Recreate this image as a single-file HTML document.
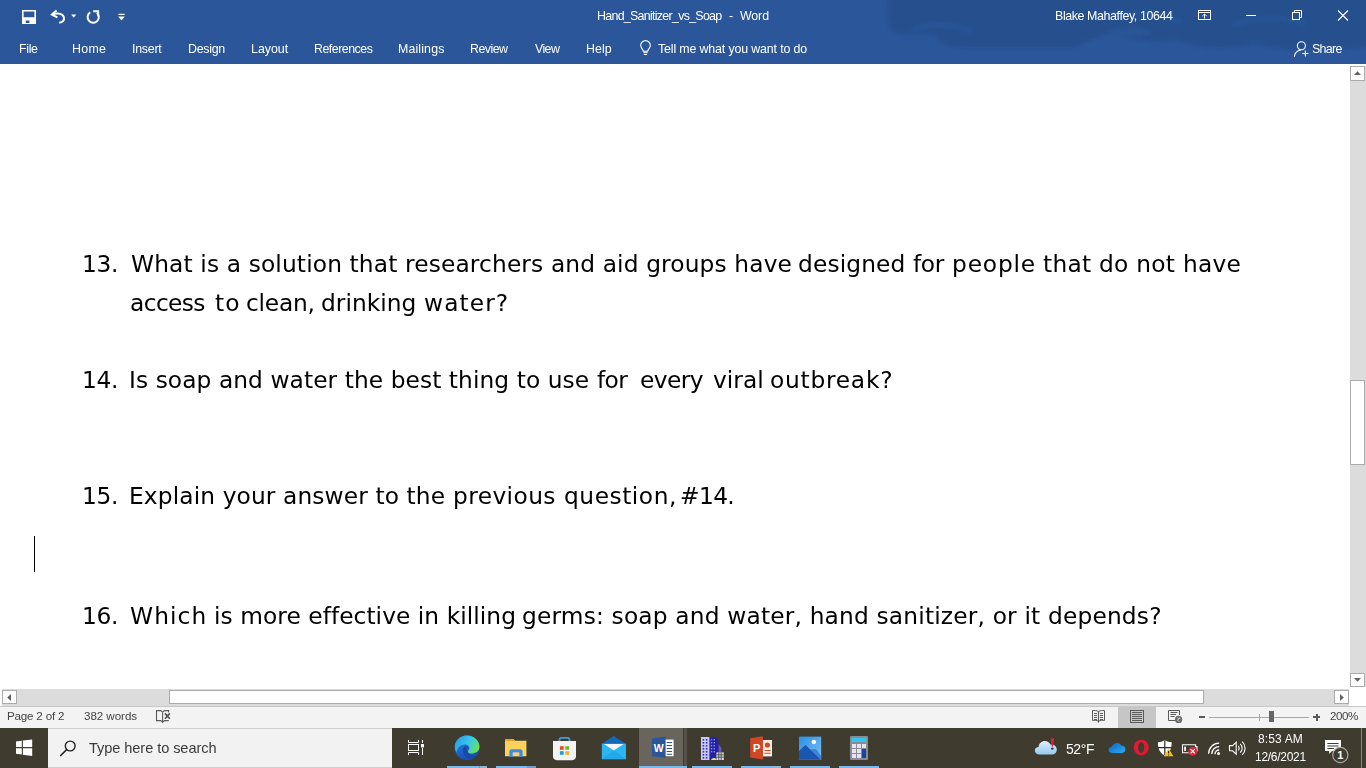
<!DOCTYPE html>
<html lang="en">
<head>
<meta charset="utf-8">
<title>Hand_Sanitizer_vs_Soap - Word</title>
<style>
*{box-sizing:border-box;margin:0;padding:0}
html,body{width:1366px;height:768px;overflow:hidden;background:#fff}
body{position:relative;font-family:"Liberation Sans",sans-serif;color:#000}
.abs{position:absolute}
.t{position:absolute;white-space:nowrap;line-height:1;will-change:transform}
#top{left:0;top:0;width:1366px;height:64px;background:#2b579a}
#top .t{color:#fff;font-size:12.4px}
#doc{left:0;top:64px;width:1349px;height:625px;background:#fff}
.q{position:absolute;white-space:nowrap;font-family:"DejaVu Sans","Liberation Sans",sans-serif;font-size:23.3px;line-height:1;color:#000;will-change:transform}
#vsb{left:1350px;top:66px;width:16px;height:621px;background:#dcdcdc}
#hsb{left:2px;top:689px;width:1347px;height:17px;background:#dcdcdc}
.sbtn{position:absolute;background:#fff;border:1px solid #ababab}
#status{left:0;top:706px;width:1366px;height:22px;background:#f3f3f3}
#status .t{color:#444;font-size:11.6px}
#task{left:0;top:728px;width:1366px;height:40px;background:#3f3b2f}
#task .t{color:#fff}
</style>
</head>
<body>
<!-- ===== Title bar + ribbon tabs ===== -->
<div id="top" class="abs">
  <!-- cloud pattern -->
  <svg class="abs" style="left:860px;top:0" width="506" height="64" viewBox="0 0 506 64">
    <defs><filter id="bl" x="-20%" y="-50%" width="140%" height="200%"><feGaussianBlur stdDeviation="2"/></filter></defs>
    <g filter="url(#bl)">
      <path d="M30 -6C24 8 26 26 34 34L74 35C78 44 90 49 110 48L212 48C226 44 236 36 250 34C270 40 296 44 316 40C340 50 372 50 396 44C420 52 470 52 520 46V-6Z" fill="#264f8e"/>
      <path d="M52 30C70 22 96 24 112 32M232 18C262 10 300 12 322 22M372 26C392 16 424 16 446 24" fill="none" stroke="#2b579a" stroke-width="4" opacity="0.8"/>
      <ellipse cx="270" cy="32" rx="22" ry="5" fill="#2b579a" opacity="0.7"/>
    </g>
  </svg>
  <span class="t" id="ttl" style="left:596.55px;top:10px;letter-spacing:-0.697px">Hand_Sanitizer_vs_Soap</span>
  <span class="t" id="ttlb" style="left:728.5px;top:10px">-</span>
  <span class="t" id="ttlc" style="left:739.64px;top:10px;letter-spacing:-0.12px">Word</span>
  <span class="t" id="usr" style="left:1054.91px;top:9.7px;letter-spacing:-0.387px">Blake Mahaffey, 10644</span>
  <span class="t" id="m1" style="left:19.36px;top:42.7px;letter-spacing:-0.33px">File</span>
  <span class="t" id="m2" style="left:72.4px;top:42.7px;letter-spacing:0.3px">Home</span>
  <span class="t" id="m3" style="left:132.46px;top:42.7px;letter-spacing:-0.252px">Insert</span>
  <span class="t" id="m4" style="left:188.09px;top:42.7px;letter-spacing:-0.27px">Design</span>
  <span class="t" id="m5" style="left:251.1px;top:42.7px;letter-spacing:0.0px">Layout</span>
  <span class="t" id="m6" style="left:314.1px;top:42.7px;letter-spacing:-0.5px">References</span>
  <span class="t" id="m7" style="left:398.1px;top:42.7px;letter-spacing:0.129px">Mailings</span>
  <span class="t" id="m8" style="left:470.1px;top:42.7px;letter-spacing:-0.54px">Review</span>
  <span class="t" id="m9" style="left:534.55px;top:42.7px;letter-spacing:-0.6px">View</span>
  <span class="t" id="m10" style="left:586.37px;top:42.7px;letter-spacing:0.06px">Help</span>
  <span class="t" id="m11" style="left:657.9px;top:42.7px;letter-spacing:-0.146px">Tell me what you want to do</span>
  <span class="t" id="m12" style="left:1312.19px;top:42.7px;letter-spacing:-0.675px">Share</span>

  <!-- quick access toolbar -->
  <svg class="abs" style="left:22px;top:10px" width="14" height="14" viewBox="0 0 14 14">
    <path d="M0 0H14V14H0ZM1.6 1.6V7.2H12.4V1.6ZM3.8 10.6V13H7.4V10.6Z" fill="#fff" fill-rule="evenodd"/>
  </svg>
  <svg class="abs" style="left:50px;top:9px" width="28" height="16" viewBox="0 0 28 16">
    <path d="M6.6 1.4L1.8 5.6L7.4 8.4" fill="none" stroke="#fff" stroke-width="2" stroke-linejoin="miter"/>
    <path d="M2.4 5.6C6.5 3.8 12.4 4 13.8 8C14.8 11.4 12.2 13.8 9.2 13.4" fill="none" stroke="#fff" stroke-width="2"/>
    <path d="M21.2 5.6H26.2L23.7 8.8Z" fill="#fff"/>
  </svg>
  <svg class="abs" style="left:85px;top:9px" width="16" height="16" viewBox="0 0 16 16">
    <path d="M5.2 3.4A5.6 5.6 0 1 0 11.8 3.8" fill="none" stroke="#fff" stroke-width="2"/>
    <path d="M8.2 2.2H13.2V7.2" fill="none" stroke="#fff" stroke-width="1.9"/>
  </svg>
  <svg class="abs" style="left:117px;top:13px" width="9" height="9" viewBox="0 0 9 9">
    <rect x="1.4" y="0.8" width="6.2" height="1.2" fill="#fff"/>
    <path d="M1.2 3.6H7.8L4.5 7.6Z" fill="#fff"/>
  </svg>
  <!-- lightbulb -->
  <svg class="abs" style="left:638px;top:40px" width="15" height="17" viewBox="0 0 15 17">
    <path d="M5.3 11.2C5.3 9.2 2.7 8.2 2.7 5.4A4.8 4.8 0 0 1 12.3 5.4C12.3 8.2 9.7 9.2 9.7 11.2Z" fill="none" stroke="#fff" stroke-width="1.1"/>
    <path d="M5.4 12.7H9.6M5.9 14.5H9.1" stroke="#fff" stroke-width="1"/>
  </svg>
  <!-- window controls -->
  <svg class="abs" style="left:1197px;top:9px" width="15" height="12" viewBox="0 0 15 12">
    <rect x="1.5" y="1.5" width="12" height="9" fill="none" stroke="#fff" stroke-width="1"/>
    <path d="M1.5 3.5H13.5" stroke="#fff" stroke-width="1"/>
    <path d="M7.5 9.5V5.2M5.3 7.2L7.5 5L9.7 7.2" fill="none" stroke="#fff" stroke-width="1"/>
  </svg>
  <div class="abs" style="left:1246px;top:15px;width:10px;height:1px;background:#fff"></div>
  <svg class="abs" style="left:1291px;top:9px" width="12" height="12" viewBox="0 0 12 12">
    <path d="M3.5 3.5V1.5H10.5V8.5H8.5" fill="none" stroke="#fff" stroke-width="1"/>
    <rect x="1.5" y="3.5" width="7" height="7" fill="none" stroke="#fff" stroke-width="1"/>
  </svg>
  <svg class="abs" style="left:1337px;top:10px" width="12" height="11" viewBox="0 0 12 11">
    <path d="M1 0.5L11 10.5M11 0.5L1 10.5" stroke="#fff" stroke-width="1.1"/>
  </svg>
  <!-- share -->
  <svg class="abs" style="left:1293px;top:40px" width="17" height="18" viewBox="0 0 17 18">
    <circle cx="8.4" cy="5.8" r="4" fill="none" stroke="#fff" stroke-width="1.1"/>
    <path d="M1.4 16.8C1.8 12.6 4.6 10.4 8 10" fill="none" stroke="#fff" stroke-width="1.1"/>
    <path d="M12.4 10.4V16.6M9.3 13.5H15.5" stroke="#fff" stroke-width="1.1"/>
  </svg>
</div>

<!-- ===== Document ===== -->
<div id="doc" class="abs">
  <span class="q" id="n13" style="left:82px;letter-spacing:-0.3px;top:188px">13.</span>
  <span class="q" id="q13a" style="left:130.61px;top:188px;letter-spacing:0.138px">What is a solution that researchers and aid groups have</span>
  <span class="q" id="q13c" style="left:797.91px;top:188px;letter-spacing:0.127px">designed</span>
  <span class="q" id="q13d" style="left:913.38px;top:188px;letter-spacing:-0.405px">for</span>
  <span class="q" id="q13e" style="left:952.21px;top:188px;letter-spacing:0.846px">people</span>
  <span class="q" id="q13f" style="left:1043.18px;top:188px;letter-spacing:0.264px">that do not have</span>
  <span class="q" id="q13b" style="left:130.38px;top:227px;letter-spacing:-0.6px">access</span>
  <span class="q" id="q13g" style="left:214.94px;top:227px;letter-spacing:1.1px">to</span>
  <span class="q" id="q13h" style="left:245.57px;top:227px;letter-spacing:-0.216px">clean,</span>
  <span class="q" id="q13i" style="left:321.37px;top:227px;letter-spacing:0.024px">drinking</span>
  <span class="q" id="q13j" style="left:424.24px;top:227px;letter-spacing:1.082px">water?</span>
  <span class="q" id="n14" style="left:82px;letter-spacing:-0.3px;top:304px">14.</span>
  <span class="q" id="q14" style="left:129.28px;top:304px;letter-spacing:0.079px">Is soap and water the best thing to use</span>
  <span class="q" id="q14b" style="left:596.94px;top:304px;letter-spacing:-0.6px">for</span>
  <span class="q" id="q14c" style="left:640.18px;top:304px;letter-spacing:-0.6px">every</span>
  <span class="q" id="q14d" style="left:712.71px;top:304px;letter-spacing:0.048px">viral</span>
  <span class="q" id="q14e" style="left:770.43px;top:304px;letter-spacing:0.753px">outbreak?</span>
  <span class="q" id="n15" style="left:82px;letter-spacing:-0.3px;top:420px">15.</span>
  <span class="q" id="q15" style="left:129.17px;top:420px;letter-spacing:0.12px">Explain your answer to the</span>
  <span class="q" id="q15b" style="left:453.47px;top:420px;letter-spacing:0.407px">previous</span>
  <span class="q" id="q15c" style="left:564.32px;top:420px;letter-spacing:0.538px">question,</span>
  <span class="q" id="q15d" style="left:680.36px;top:420px;letter-spacing:-0.6px">#14.</span>
  <span class="q" id="n16" style="left:82px;letter-spacing:-0.3px;top:540px">16.</span>
  <span class="q" id="q16" style="left:130.27px;top:540px;letter-spacing:1.1px">Which</span>
  <span class="q" id="q16b" style="left:214.01px;top:540px;letter-spacing:0.059px">is more effective in killing</span>
  <span class="q" id="q16c" style="left:521.82px;top:540px;letter-spacing:0.175px">germs: soap and water, hand sanitizer, or it depends?</span>
  <div class="abs" id="caret" style="left:34px;top:472px;width:1px;height:36px;background:#000"></div>
</div>

<!-- ===== Scrollbars ===== -->
<div id="vsb" class="abs">
  <div class="sbtn" style="left:0;top:0;width:15px;height:15px"></div>
  <svg class="abs" style="left:4px;top:5px" width="7" height="4" viewBox="0 0 7 4"><path d="M0 4L3.5 0.2L7 4Z" fill="#606060"/></svg>
  <div class="sbtn" style="left:0;top:314px;width:15px;height:85px"></div>
  <div class="sbtn" style="left:0;top:607px;width:15px;height:14px"></div>
  <svg class="abs" style="left:4px;top:612px" width="7" height="4" viewBox="0 0 7 4"><path d="M0 0L3.5 3.8L7 0Z" fill="#606060"/></svg>
</div>
<div id="hsb" class="abs">
  <div class="sbtn" style="left:0;top:1px;width:15px;height:14px"></div>
  <svg class="abs" style="left:5px;top:4.5px" width="4" height="7" viewBox="0 0 4 7"><path d="M4 0L0.2 3.5L4 7Z" fill="#606060"/></svg>
  <div class="sbtn" style="left:167px;top:1px;width:1035px;height:14px"></div>
  <div class="sbtn" style="left:1332px;top:1px;width:15px;height:14px"></div>
  <svg class="abs" style="left:1338px;top:4.5px" width="4" height="7" viewBox="0 0 4 7"><path d="M0 0L3.8 3.5L0 7Z" fill="#606060"/></svg>
</div>

<!-- ===== Status bar ===== -->
<div id="status" class="abs">
  <span class="t" id="s1" style="left:7.39px;top:4px;letter-spacing:-0.189px">Page 2 of 2</span>
  <span class="t" id="s2" style="left:83.82px;top:4px;letter-spacing:-0.049px">382 words</span>
  <span class="t" id="s3" style="left:1330.11px;top:4px;letter-spacing:-0.45px">200%</span>
  <div class="abs" style="left:0;top:0;width:1366px;height:1px;background:#c8c8c8"></div>
  <!-- proofing book icon -->
  <svg class="abs" style="left:155px;top:3px" width="17" height="15" viewBox="0 0 17 15">
    <path d="M7.6 3.2L5.8 1.6H1.5V11.6H5.8L7.6 13.2L9.4 11.6H13.8" fill="none" stroke="#5a5a5a" stroke-width="1.1"/>
    <path d="M7.6 3.2V13.4M7.6 3.2L9.4 1.6H13.6V3.2" fill="none" stroke="#5a5a5a" stroke-width="1.1"/>
    <path d="M10 4.4L14.8 9.8M14.8 4.4L10 9.8" stroke="#505050" stroke-width="1.7"/>
  </svg>
  <!-- read mode -->
  <svg class="abs" style="left:1091px;top:3px" width="15" height="15" viewBox="0 0 15 15">
    <path d="M7.5 2.4C5.8 1.5 3.5 1.4 1.5 1.6V11.4C3.5 11.2 5.8 11.3 7.5 12.2C9.2 11.3 11.5 11.2 13.5 11.4V1.6C11.5 1.4 9.2 1.5 7.5 2.4Z" fill="none" stroke="#5a5a5a" stroke-width="1"/>
    <path d="M7.5 2.4V13.6" stroke="#5a5a5a" stroke-width="1.2"/>
    <path d="M3 4.5H6M3 6.5H6M3 8.5H6M3 10.5H6M9 4.5H12M9 6.5H12M9 8.5H12M9 10.5H12" stroke="#5a5a5a" stroke-width="1"/>
  </svg>
  <!-- print layout (selected) -->
  <div class="abs" style="left:1118px;top:1px;width:38px;height:21px;background:#c6c6c6"></div>
  <svg class="abs" style="left:1130px;top:4px" width="14" height="14" viewBox="0 0 14 14">
    <rect x="0.5" y="0.5" width="13" height="12" fill="none" stroke="#5a5a5a" stroke-width="1"/>
    <path d="M2 2.5H12M2 4.5H12M2 6.5H12M2 8.5H12M2 10.5H12" stroke="#5a5a5a" stroke-width="1"/>
  </svg>
  <!-- web layout -->
  <svg class="abs" style="left:1168px;top:4px" width="15" height="14" viewBox="0 0 15 14">
    <path d="M8 10.5H0.5V0.5H11.5V5" fill="none" stroke="#5a5a5a" stroke-width="1"/>
    <path d="M2.5 2.5H9.5M2.5 4.5H8M2.5 6.5H6.5" stroke="#5a5a5a" stroke-width="1"/>
    <circle cx="10.6" cy="9.4" r="3.6" fill="#6a6a6a"/>
    <path d="M9.2 7.6L10.6 8.6L9.8 10.4L11 11.6M12 7.4L11.6 9" stroke="#e8e8e8" stroke-width="0.9" fill="none"/>
  </svg>
  <!-- zoom slider -->
  <div class="abs" style="left:1199px;top:10px;width:6px;height:2px;background:#5a5a5a"></div>
  <div class="abs" style="left:1209px;top:11px;width:100px;height:1px;background:#a6a6a6"></div>
  <div class="abs" style="left:1259px;top:8px;width:1px;height:7px;background:#a6a6a6"></div>
  <div class="abs" style="left:1269px;top:5px;width:5px;height:11px;background:#666"></div>
  <div class="abs" style="left:1313px;top:10px;width:7px;height:2px;background:#5a5a5a"></div>
  <div class="abs" style="left:1315.5px;top:7.5px;width:2px;height:7px;background:#5a5a5a"></div>
</div>

<!-- ===== Taskbar ===== -->
<div id="task" class="abs">
  <div class="abs" id="search" style="left:48px;top:0;width:344px;height:40px;background:#f2f2f2;border-top:1px solid #cfcfcf;border-bottom:1px solid #cfcfcf"></div>
  <div class="abs" style="left:639px;top:0;width:44px;height:40px;background:#69655c"></div><div class="abs" style="left:684px;top:0;width:3px;height:40px;background:#55514a"></div>
  <svg class="abs" style="left:0;top:0" width="1366" height="40" viewBox="0 728 1366 40">
    <defs>
      <linearGradient id="gEdge1" x1="0" y1="0.2" x2="1" y2="0.6"><stop offset="0" stop-color="#2b9be8"/><stop offset="0.5" stop-color="#36c2ee"/><stop offset="0.8" stop-color="#4fd6a0"/><stop offset="1" stop-color="#6ee043"/></linearGradient>
      <linearGradient id="gEdge2" x1="0" y1="0" x2="0.4" y2="1"><stop offset="0" stop-color="#1f8fe8"/><stop offset="1" stop-color="#1b4db3"/></linearGradient>
      <linearGradient id="gSky" x1="0" y1="0" x2="1" y2="1"><stop offset="0" stop-color="#2a8fe6"/><stop offset="1" stop-color="#7cc4f4"/></linearGradient>
      <linearGradient id="gWx" x1="0" y1="0" x2="0" y2="1"><stop offset="0" stop-color="#dff0fb"/><stop offset="1" stop-color="#93c9ee"/></linearGradient>
      <linearGradient id="gOd" x1="0" y1="0" x2="1" y2="1"><stop offset="0" stop-color="#0c5fc4"/><stop offset="1" stop-color="#2bb0f0"/></linearGradient>
    </defs>
    <!-- start -->
    <g fill="#fff">
      <path d="M16 741.6L21.8 740.8V747.1H16Z"/>
      <path d="M22.9 740.6L32.2 739.4V747.1H22.9Z"/>
      <path d="M16 748.2H21.8V754.6L16 753.8Z"/>
      <path d="M22.9 748.2H32.2V756L22.9 754.8Z"/>
    </g>
    <!-- search icon -->
    <circle cx="70.2" cy="746" r="4.9" fill="none" stroke="#222" stroke-width="1.4"/>
    <path d="M66.6 749.6L60.2 756" stroke="#222" stroke-width="1.5"/>
    <!-- task view -->
    <g fill="none" stroke="#fff" stroke-width="1">
      <rect x="408.5" y="744.5" width="10" height="6"/>
      <path d="M408.5 740V742.5H418.5V740"/>
      <path d="M408.5 755V752.5H418.5V755"/>
      <path d="M422.5 740V743M422.5 748V755"/>
    </g>
    <rect x="421" y="744" width="3" height="3.4" fill="#fff"/>
    <!-- edge -->
    <circle cx="467" cy="747.8" r="12.3" fill="url(#gEdge2)"/>
    <path d="M455 744.5C457 738 462 735.5 467 735.5C475 735.5 479.5 741.5 479.5 746.5C479.5 751.5 475.5 753.5 471.5 753.5C468 753.5 467 751.8 468.6 750.2C470 748.6 469.6 745.4 466 744.6C461.5 743.6 457 747 456.6 752.5C455 750 454.4 747 455 744.5Z" fill="url(#gEdge1)"/>
    <path d="M465 746C461.6 748.4 462 755 467.5 757.6C472 759.6 476.8 757 478.4 754C475 756 469.6 755.6 467.6 752C466.6 750 467 748 468.4 747Z" fill="#1a48a8"/>
    <!-- explorer -->
    <path d="M505 739.2H513.6L515.2 740.8H526.4V756.2H505Z" fill="#fcd25f"/>
    <path d="M505 739.2H513.6L515 741H505Z" fill="#e3a51a"/>
    <path d="M509.4 757V751.4C509.4 750 510.4 749.2 511.6 749.2H520.4C521.6 749.2 522.6 750 522.6 751.4V757H519.2V752.6H512.8V757Z" fill="#3b8ddb"/>
    <rect x="512.8" y="752.6" width="6.4" height="3.6" fill="#f6c98c"/>
    <!-- store -->
    <path d="M559.5 742V739.8C559.5 738.6 560.3 737.8 561.5 737.8H567.5C568.7 737.8 569.5 738.6 569.5 739.8V742" fill="none" stroke="#3f9fdc" stroke-width="1.8"/>
    <path d="M553 741H576V756.6C576 758.6 574.4 760.2 572.4 760.2H556.6C554.6 760.2 553 758.6 553 756.6Z" fill="#f3f3f3"/>
    <rect x="559.9" y="746.2" width="3.8" height="3.6" fill="#e4511f"/>
    <rect x="565.3" y="746.2" width="3.8" height="3.6" fill="#7cb52a"/>
    <rect x="559.9" y="751.2" width="3.8" height="3.6" fill="#1f9fd8"/>
    <rect x="565.3" y="751.2" width="3.8" height="3.6" fill="#f2b01e"/>
    <!-- mail -->
    <path d="M601.8 743.8L613.6 736L625.8 743.8Z" fill="#0f6cbd"/>
    <rect x="601.8" y="743.6" width="24.2" height="15.6" fill="#2bb5f1"/>
    <path d="M613.6 750.6L626 759.2H601.8Z" fill="#1e9be0" opacity="0.55"/>
    <path d="M604 744H623.6L613.8 750.4Z" fill="#f4f8fc"/>
    <!-- word -->
    <rect x="664" y="739.6" width="9.6" height="16.6" fill="#fff"/>
    <path d="M666.6 742.5H672M666.6 745.5H672M666.6 748.5H672M666.6 751.5H672M666.6 754.3H672" stroke="#2b579a" stroke-width="1.1"/>
    <path d="M651.9 738.4L665.6 736.4V758L651.9 756Z" fill="#2b579a"/>
    <text x="658.8" y="752" font-family="Liberation Sans, sans-serif" font-size="10.5" font-weight="bold" fill="#fff" text-anchor="middle">W</text>
    <!-- buildings -->
    <rect x="701" y="737" width="8.6" height="23" fill="#c9c9f6"/>
    <g fill="#3030c8">
      <rect x="702.6" y="739" width="1.6" height="1.6"/><rect x="705.8" y="739" width="1.6" height="1.6"/>
      <rect x="702.6" y="742" width="1.6" height="1.6"/><rect x="705.8" y="742" width="1.6" height="1.6"/>
      <rect x="702.6" y="745" width="1.6" height="1.6"/><rect x="705.8" y="745" width="1.6" height="1.6"/>
      <rect x="702.6" y="748" width="1.6" height="1.6"/><rect x="705.8" y="748" width="1.6" height="1.6"/>
      <rect x="702.6" y="751" width="1.6" height="1.6"/><rect x="705.8" y="751" width="1.6" height="1.6"/>
      <rect x="702.6" y="754" width="1.6" height="1.6"/><rect x="705.8" y="754" width="1.6" height="1.6"/>
      <rect x="702.6" y="757" width="1.6" height="1.6"/><rect x="705.8" y="757" width="1.6" height="1.6"/>
    </g>
    <path d="M709.6 737H716.6L718.6 741V760H709.6Z" fill="#2222a6"/>
    <g fill="#8f8fe6">
      <rect x="710.8" y="739" width="1.4" height="1.4"/><rect x="713.6" y="739" width="1.4" height="1.4"/>
      <rect x="710.8" y="742" width="1.4" height="1.4"/><rect x="713.6" y="742" width="1.4" height="1.4"/>
      <rect x="710.8" y="745" width="1.4" height="1.4"/><rect x="713.6" y="745" width="1.4" height="1.4"/>
      <rect x="710.8" y="748" width="1.4" height="1.4"/><rect x="713.6" y="748" width="1.4" height="1.4"/>
      <rect x="710.8" y="751" width="1.4" height="1.4"/><rect x="713.6" y="751" width="1.4" height="1.4"/>
    </g>
    <path d="M718.6 744L721.4 748V752H718.6Z" fill="#5a5ac8"/>
    <rect x="716.4" y="752.4" width="7.4" height="7.6" fill="#dcdce6"/>
    <path d="M716.4 754.8H723.8M716.4 757.2H723.8M718.8 752.4V760M721.2 752.4V760" stroke="#3f3b2f" stroke-width="0.8"/>
    <path d="M711 760C711.6 757.6 715.6 757 716.6 760Z" fill="#e8e45a"/>
    <!-- powerpoint -->
    <rect x="762" y="740" width="10" height="16.4" fill="#fbeee6"/>
    <circle cx="767.4" cy="745" r="2.6" fill="#d24726"/>
    <path d="M764.6 750.5H770.6M764.6 753.2H770.6" stroke="#d24726" stroke-width="1.1"/>
    <path d="M750.2 738.2L763 736.2V759.4L750.2 757.4Z" fill="#d24726"/>
    <text x="756.6" y="752.2" font-family="Liberation Sans, sans-serif" font-size="11" font-weight="bold" fill="#fff" text-anchor="middle">P</text>
    <!-- photos -->
    <rect x="799" y="736.6" width="22.2" height="23.2" fill="url(#gSky)"/>
    <path d="M799 751L805.4 745L821.2 759.8H799Z" fill="#1a55b0"/>
    <path d="M805.4 745L810 749.4L816 749L821.2 756V759.8Z" fill="#2f6cc6" opacity="0.7"/>
    <circle cx="813.8" cy="742" r="2.2" fill="#fff"/>
    <!-- calculator -->
    <rect x="850" y="736" width="18" height="24" rx="1" fill="#878c95"/>
    <rect x="851.8" y="738" width="14.4" height="4" fill="#30c6f0"/>
    <g fill="#e9e2f0">
      <rect x="852" y="744" width="4" height="4"/><rect x="857" y="744" width="4" height="4"/><rect x="862" y="744" width="4" height="4"/>
      <rect x="852" y="749" width="4" height="4"/><rect x="857" y="749" width="4" height="4"/>
      <rect x="852" y="754" width="4" height="4"/><rect x="857" y="754" width="4" height="4"/>
    </g>
    <rect x="862" y="749" width="4" height="9" fill="#1746a2"/>
    <!-- running indicators -->
    <g fill="#76b9ed">
      <rect x="447" y="766" width="32.5" height="2"/><rect x="479.5" y="766" width="7.5" height="2" fill="#8fb4d6"/>
      <rect x="496" y="766" width="31" height="2"/><rect x="527" y="766" width="9" height="2" fill="#6f9fc4"/>
      <rect x="639" y="766" width="48" height="2"/>
      <rect x="692" y="766" width="40" height="2"/>
      <rect x="741" y="766" width="31" height="2"/><rect x="772" y="766" width="9" height="2" fill="#8fb4d6"/>
      <rect x="790" y="766" width="40" height="2"/>
      <rect x="839" y="766" width="40" height="2"/>
    </g>
    <!-- weather -->
    <path d="M1039.6 754.6C1036.6 754.6 1034.8 752.8 1034.8 750.6C1034.8 748.4 1036.6 747 1038.6 747C1038.8 743.4 1041.6 741 1044.8 741C1047.4 741 1049.4 742.4 1050.4 744.6C1054 744.2 1056.8 746.4 1056.8 749.6C1056.8 752.6 1054.6 754.6 1051.8 754.6Z" fill="url(#gWx)"/>
    <path d="M1050.6 738.6L1054.2 738.2L1053 746.4L1051.8 746.4Z" fill="#e0203a"/>
    <circle cx="1052.3" cy="748.6" r="1.2" fill="#2a2a66"/>
    <!-- onedrive -->
    <path d="M1112.2 753C1110 753 1108.6 751.6 1108.6 749.8C1108.6 748 1110 746.8 1111.8 746.8C1112.4 744.4 1114.4 743 1116.8 743C1118.8 743 1120.4 744 1121.2 745.6C1123.6 745.4 1125.4 747 1125.4 749.2C1125.4 751.4 1123.8 753 1121.6 753Z" fill="url(#gOd)"/>
    <!-- opera -->
    <ellipse cx="1141.2" cy="747.5" rx="7.6" ry="7.7" fill="#e01a33"/>
    <ellipse cx="1141.2" cy="747.5" rx="3.1" ry="5.4" fill="#3f3b2f"/>
    <!-- defender -->
    <path d="M1164.8 740.2C1167 741.4 1169.4 742 1171.7 742.2C1171.7 748 1170 753 1164.8 755.6C1159.6 753 1157.9 748 1157.9 742.2C1160.2 742 1162.6 741.4 1164.8 740.2Z" fill="#fff"/>
    <path d="M1164.8 740.4V755.4M1158 747.6H1171.6" stroke="#2c2a24" stroke-width="1.2"/>
    <path d="M1168.6 748.6L1173.4 756.2H1163.8Z" fill="#f6c21c"/>
    <path d="M1168.6 751V753.6M1168.6 754.4V755.4" stroke="#2c2a24" stroke-width="1.1"/>
    <!-- battery -->
    <path d="M1182.5 744.7H1195.5V746.6H1197V751H1195.5V752.8H1182.5Z" fill="none" stroke="#fff" stroke-width="1.1"/>
    <rect x="1184.2" y="746.6" width="1.8" height="4.4" fill="#fff"/>
    <circle cx="1192.7" cy="751.3" r="4.5" fill="#d8283a"/>
    <path d="M1190.6 749.2L1194.8 753.4M1194.8 749.2L1190.6 753.4" stroke="#fff" stroke-width="1.1"/>
    <!-- wifi -->
    <g fill="none" stroke="#fff" stroke-width="1.3">
      <path d="M1208.6 753.8A10.6 10.6 0 0 1 1219.2 743.2"/>
      <path d="M1211.8 754A7.4 7.4 0 0 1 1219.2 746.6"/>
      <path d="M1215 754.2A4.2 4.2 0 0 1 1219.2 750"/>
    </g>
    <circle cx="1218.6" cy="753.6" r="1.5" fill="#fff"/>
    <!-- volume -->
    <path d="M1229.5 745.6H1232.6L1236.2 742.2V754.2L1232.6 750.8H1229.5Z" fill="none" stroke="#fff" stroke-width="1.1"/>
    <g fill="none" stroke="#fff" stroke-width="1.1">
      <path d="M1238.2 746A3 3 0 0 1 1238.2 750.4"/>
      <path d="M1240.2 743.8A6 6 0 0 1 1240.2 752.6"/>
      <path d="M1242.2 741.6A9 9 0 0 1 1242.2 754.8"/>
    </g>
    <!-- notifications -->
    <path d="M1325 740H1341V751H1332L1329.2 754V751H1325Z" fill="#fff"/>
    <path d="M1327.4 743.5H1338.6M1327.4 746H1338.6M1327.4 748.5H1334" stroke="#3f3b2f" stroke-width="1"/>
    <circle cx="1340.3" cy="755" r="7.6" fill="#3f3b2f" stroke="#a9a9a9" stroke-width="1.2"/>
    <text x="1340.4" y="759" font-family="Liberation Sans, sans-serif" font-size="11" font-weight="bold" fill="#fff" text-anchor="middle">1</text>
    <!-- show desktop -->
    <rect x="1361" y="728" width="1" height="40" fill="#8a877f"/>
  </svg>
  <span class="t" id="srch" style="left:89.17px;top:13.2px;font-size:14.6px;color:#3a3a3a;letter-spacing:-0.08px">Type here to search</span>
  <span class="t" id="temp" style="left:1065.72px;top:14px;font-size:14px;letter-spacing:-0.42px">52°F</span>
  <span class="t" id="clk" style="left:1258.19px;top:5px;font-size:12px;letter-spacing:0.12px">8:53 AM</span>
  <span class="t" id="dat" style="left:1255.18px;top:23px;font-size:12px;letter-spacing:-0.281px">12/6/2021</span>
</div>
</body>
</html>
